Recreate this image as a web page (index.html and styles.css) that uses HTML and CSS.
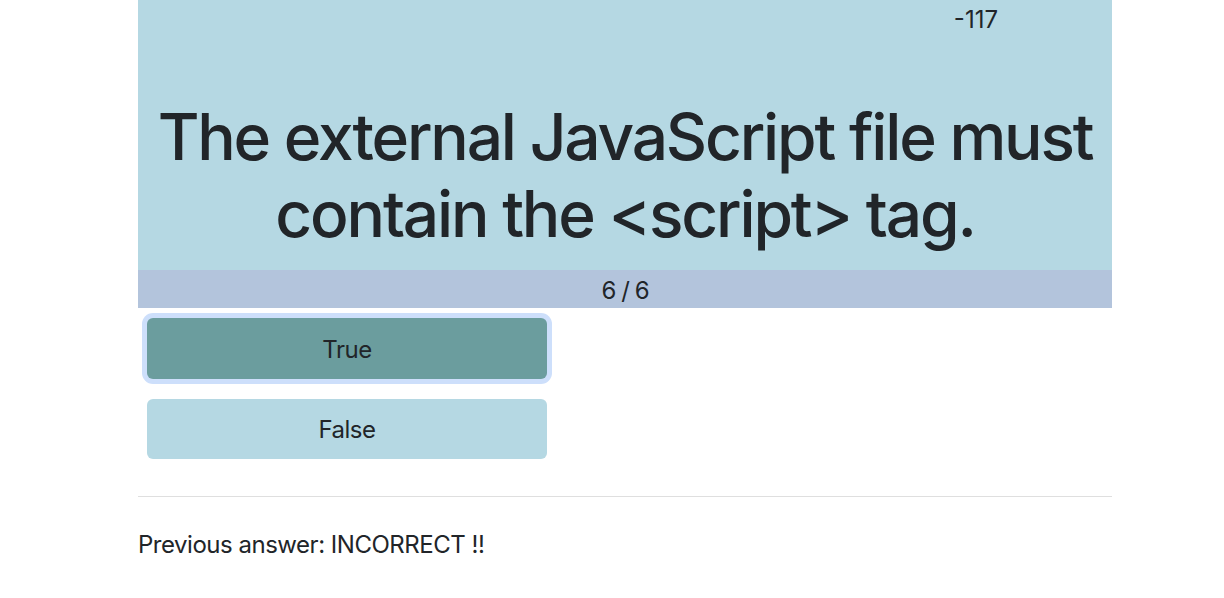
FILE: index.html
```html
<!DOCTYPE html>
<html lang="en">
<head>
<meta charset="utf-8">
<title>Quiz</title>
<link rel="stylesheet" href="styles.css">
</head>
<body>
<main class="page">
  <section class="question-panel">
    <div class="score-row"><span class="score">-117</span></div>
    <h1 class="question">The external JavaScript file must contain the &lt;script&gt; tag.</h1>
  </section>
  <div class="progress">6 / 6</div>
  <div class="answers">
    <button class="answer answer-selected" type="button">True</button>
    <button class="answer" type="button">False</button>
  </div>
  <hr class="divider">
  <p class="previous">Previous answer: INCORRECT !!</p>
</main>
</body>
</html>
```

FILE: styles.css
```css
* { box-sizing: border-box; }

html, body {
  margin: 0;
  padding: 0;
  background: #ffffff;
}

body {
  font-family: Inter, "Noto Sans", "Liberation Sans", sans-serif;
  color: #212529;
  font-size: 24px;
  line-height: 1.5;
  letter-spacing: -0.02em;
}

.page {
  width: 974px;
  margin-left: 138px;
}

.question-panel {
  background: #b5d8e3;
  padding: 2px 0 17px;
  display: flex;
  flex-direction: column;
}

.score-row {
  display: flex;
  justify-content: flex-end;
  padding-right: 114px;
  line-height: 36px;
  letter-spacing: 0;
}

.question {
  margin: 61px 0 0;
  text-align: center;
  font-size: 64px;
  font-weight: 500;
  line-height: 1.2;
  letter-spacing: -0.034em;
}

.progress {
  background: #b3c4dc;
  height: 38px;
  padding-top: 3px;
  line-height: 35px;
  text-align: center;
  letter-spacing: -0.04em;
}

.answers {
  display: flex;
  flex-direction: column;
  align-items: flex-start;
  gap: 20px;
  padding: 10px 0 0 9px;
}

.answer {
  width: 400px;
  height: 60px;
  border: 0;
  border-radius: 6px;
  background: #b5d8e3;
  color: #212529;
  font-family: inherit;
  font-size: 24px;
  letter-spacing: inherit;
  line-height: 36px;
  padding: 3px 0 0;
}

.answer-selected {
  height: 61px;
  background: #6b9d9e;
  box-shadow: 0 0 0 5px #cddffb;
}

.divider {
  margin: 37px 0 0;
  border: 0;
  border-top: 1px solid #dfdfdf;
}

.previous {
  margin: 30px 0 0;
  line-height: 36px;
}
```
